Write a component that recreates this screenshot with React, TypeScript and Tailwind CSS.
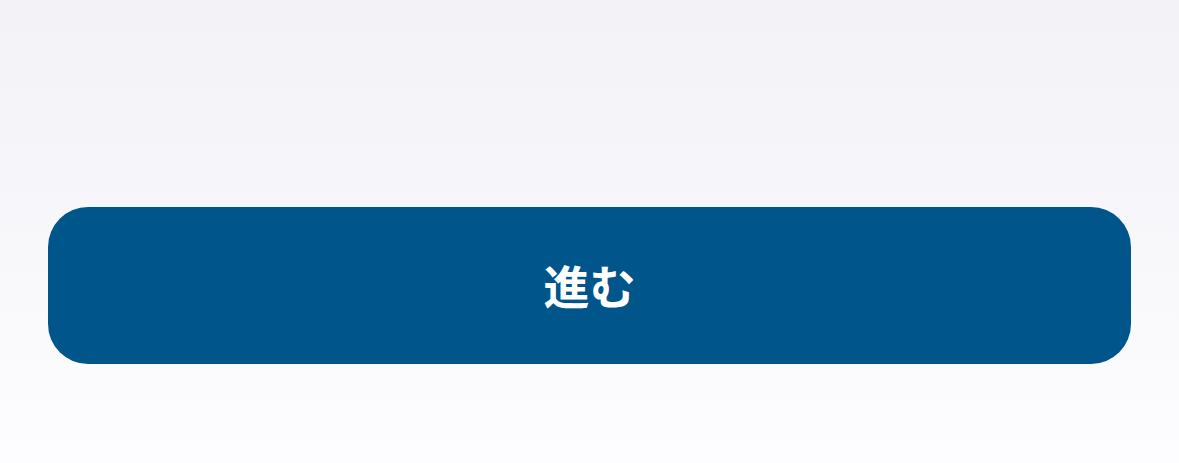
import React from 'react';

export default function App() {
  return (
    <div className="min-h-[463px] w-full bg-gradient-to-b from-[#f2f2f7] to-[#fdfdff] px-12 pt-[207px] pb-[99px]">
      <button
        type="button"
        className="flex h-[157px] w-full items-center justify-center rounded-[40px] bg-[#00558b] pb-1 text-[46px] font-semibold leading-none text-white"
        style={{ fontFamily: '"Noto Sans CJK JP", "Noto Sans", sans-serif' }}
      >
        進む
      </button>
    </div>
  );
}
